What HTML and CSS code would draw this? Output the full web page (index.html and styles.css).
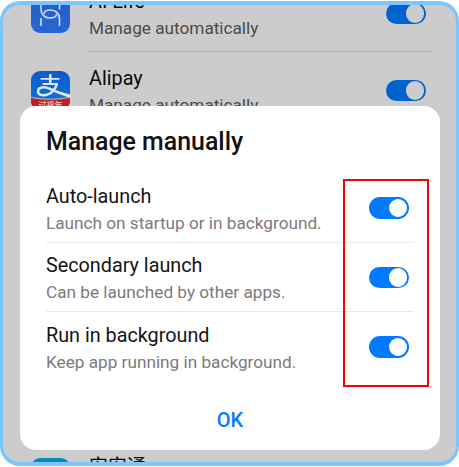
FILE: index.html
```html
<!DOCTYPE html>
<html lang="en">
<head>
<meta charset="utf-8">
<title>App launch</title>
<link rel="stylesheet" href="styles.css">
</head>
<body>
<main class="screen">
  <div class="apps">
    <div class="app">
      <svg class="icon" viewBox="0 0 39 39">
        <defs><linearGradient id="life" x1="0" y1="0" x2="0" y2="1"><stop offset="0" stop-color="#235bc6"/><stop offset="1" stop-color="#2868d4"/></linearGradient></defs>
        <rect width="39" height="39" rx="9" fill="url(#life)"/>
        <g fill="none" stroke="#d2dcec" stroke-width="1.6">
          <path d="M10 7v8.500c0 5 4 8.500 8.500 8.500 4 0 7-1.500 7-4"/>
          <path d="M28.500 32v-7.500c0-5-4-8.500-9-8.500-4 0-6.500 1.500-6.500 4"/>
          <path d="M10 32v-8M28.500 7v8.500"/>
        </g>
      </svg>
      <div class="label"><div class="name">AI Life</div><div class="note">Manage automatically</div></div>
      <span class="switch"></span>
    </div>
    <div class="app">
      <svg class="icon" viewBox="0 0 39 39">
        <defs><linearGradient id="pay" x1="0" y1="0" x2="0" y2="1"><stop offset="0" stop-color="#1059cc"/><stop offset="1" stop-color="#087bdf"/></linearGradient><clipPath id="tile"><rect width="39" height="39" rx="9"/></clipPath></defs>
        <g clip-path="url(#tile)">
          <rect width="39" height="39" fill="url(#pay)"/>
          <g fill="none" stroke="#dde5ee">
            <path d="M9.500 7.800h19M11.500 13h15.500" stroke-width="1.800"/>
            <path d="M19.300 3.300v9.700" stroke-width="2.600"/>
            <path d="M26 13c-1.500 4.500-4.500 8.500-8.500 10.200-4.500 2-10.500 1.300-10.500-2.700 0-4.500 6-5.200 11-3C24 19.500 30 23 39 25" stroke-width="2.400"/>
          </g>
          <path d="M24 19.500L39 23.500V27L22 20.500z" fill="#dde5ee"/>
          <path d="M0 26.500Q19.500 30 39 26.500V39H0z" fill="#bd2026"/>
          <path d="M0 26.500Q19.500 30 39 26.500" fill="none" stroke="#e0b6a0" stroke-width="1"/>
          <text x="19.500" y="36.500" text-anchor="middle" class="ribbon">过福年</text>
        </g>
      </svg>
      <div class="label"><div class="name">Alipay</div><div class="note">Manage automatically</div></div>
      <span class="switch"></span>
    </div>
    <div class="app last">
      <svg class="icon" viewBox="0 0 39 39"><rect width="39" height="39" rx="9" fill="#058bbd"/></svg>
      <div class="label"><div class="name">安安通</div></div>
    </div>
  </div>
</main>
<section class="dialog">
  <h1>Manage manually</h1>
  <div class="option"><div><div class="title">Auto-launch</div><div class="desc">Launch on startup or in background.</div></div><span class="switch on"></span></div>
  <div class="option"><div><div class="title">Secondary launch</div><div class="desc">Can be launched by other apps.</div></div><span class="switch on"></span></div>
  <div class="option"><div><div class="title">Run in background</div><div class="desc">Keep app running in background.</div></div><span class="switch on"></span></div>
  <button class="ok">OK</button>
</section>
<div class="highlight"></div>
</body>
</html>
```
FILE: styles.css
```css
* { box-sizing: border-box; }
body {
  margin: 0;
  width: 459px;
  height: 467px;
  overflow: hidden;
  position: relative;
  background: #fff;
  font-family: Roboto, "Noto Sans CJK SC", sans-serif;
}
.screen {
  height: 465px;
  margin-top: 1px;
  border: 4px solid #7cc6ff;
  border-left-width: 3px;
  border-right-width: 3px;
  border-radius: 20px;
  background: #ccc;
  overflow: hidden;
  display: flow-root;
}
.apps { margin: -31px 24px 0 28px; }
.app {
  height: 77.4px;
  padding-top: 19.500px;
  display: flex;
  align-items: flex-start;
}
.icon { width: 39px; height: 39px; flex: none; }
.label {
  flex: 1;
  height: 58.400px;
  margin-left: 19px;
  border-bottom: 1px solid #adadad;
}
.name { font-size: 19.800px; line-height: 24px; margin-top: -3.600px; color: #0b0b0b; white-space: nowrap; }
.note { font-size: 17.200px; line-height: 20px; margin-top: 4px; color: #4b4b4b; white-space: nowrap; }
.app .switch { margin: 9px 6.500px 0 -46px; }
.last { margin-top: 309.600px; }
.last .name { font-size: 19px; margin-top: -2.500px; }
.ribbon { font: 700 8px "Noto Sans CJK SC", sans-serif; fill: #e2b9a9; }
.switch {
  width: 39.500px;
  height: 21.500px;
  border-radius: 11px;
  background: #0062cf;
  padding: 1.500px;
  display: flex;
  justify-content: flex-end;
  flex: none;
}
.switch::before {
  content: "";
  width: 18.500px;
  height: 18.500px;
  border-radius: 50%;
  background: #ccc;
}
.switch.on { background: #007bff; }
.switch.on::before { background: #fff; }
.dialog {
  position: absolute;
  left: 20px;
  top: 106px;
  width: 420px;
  height: 344px;
  padding: 22px 26px 0;
  border-radius: 16px;
  background: #fff;
}
h1 { margin: 0 0 17px; font-size: 24.900px; line-height: 28px; font-weight: 500; color: #111; }
.option {
  height: 69.500px;
  padding-right: 5.500px;
  padding-top: 11.500px;
  border-bottom: 1px solid #e9e9e9;
  display: flex;
  justify-content: space-between;
}
.option:nth-of-type(3) { border: 0; }
.title { font-size: 19.800px; line-height: 24px; color: #141414; }
.desc { font-size: 17.200px; line-height: 20px; margin-top: 4px; color: #7b7b7b; }
.option .switch { margin-top: 12.500px; }
.ok {
  display: block;
  margin: 26px auto 0;
  padding: 0;
  border: 0;
  background: none;
  color: #087bfa;
  font: 500 20px/24px Roboto, sans-serif;
}
.highlight {
  position: absolute;
  left: 343px;
  top: 179px;
  width: 86px;
  height: 208px;
  border: 2px solid #f00;
}
```
